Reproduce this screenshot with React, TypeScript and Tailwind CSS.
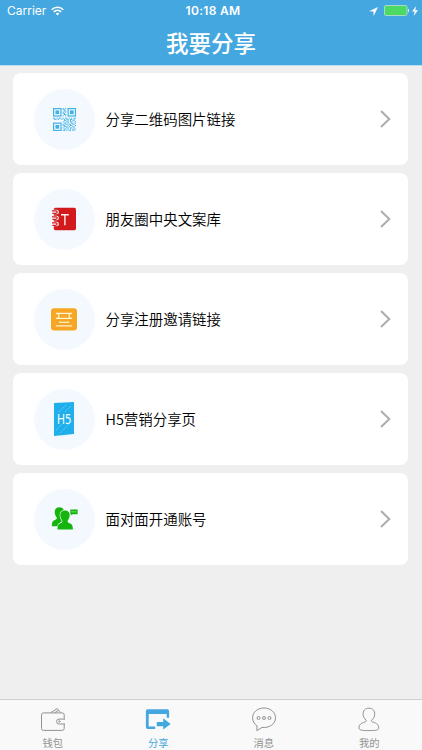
import { useState } from 'react'
import type { ReactNode } from 'react'

// One string per row of modules, the three finder squares are drawn separately
const qrRows = [
  '........#.#........',
  '........##.........',
  '.........##........',
  '........#.#........',
  '........##.........',
  '.........##........',
  '........#.#........',
  '...................',
  '##.#.##.#.##.#.#.##',
  '.##.#..#.#.##.##.#.',
  '.........##.#.#.##.',
  '........#..##.##..#',
  '.........##.#..##.#',
  '........#.##.##.##.',
  '........##..#.##..#',
  '.........###.#..##.',
  '........#..##.##.#.',
  '.........##.#.#.#.#',
  '........##.#.##.##.',
]

function QrIcon() {
  return (
    <svg className="h-[23px] w-[23px]" viewBox="0 0 19 19" fill="#41b1e5">
      {[[0, 0], [12, 0], [0, 12]].map(([x, y]) => (
        <g key={`${x}-${y}`}>
          <rect x={x + 0.5} y={y + 0.5} width="6.1" height="6.1" fill="none" stroke="#41b1e5" strokeWidth="1" />
          <rect x={x + 2} y={y + 2} width="3.1" height="3.1" />
        </g>
      ))}
      {qrRows.map((row, y) =>
        row.split('').map((cell, x) =>
          cell === '#' ? <rect key={`${x}-${y}`} x={x} y={y} width="0.9" height="0.9" /> : null
        )
      )}
    </svg>
  )
}

function NotebookIcon() {
  return (
    <svg className="h-[24px] w-[26px]" viewBox="0 0 26 24">
      <rect x="2.8" y="0.8" width="22.2" height="22.4" rx="1.6" fill="#d2191c" />
      {[3, 9, 15].map(y => (
        <g key={y}>
          <rect x="-1" y={y - 0.3} width="8.8" height="4.6" rx="2" fill="#f4f9ff" />
          <path d={`M1 ${y + 0.9} H5 A1.2 1.2 0 0 1 5 ${y + 3.3} H1.4`} fill="none" stroke="#d2191c" strokeWidth="1.2" />
        </g>
      ))}
      <path d="M10 7.7 H17.8 M13.9 7.7 V18.2" fill="none" stroke="#fdeeee" strokeWidth="1.4" />
    </svg>
  )
}

function InviteIcon() {
  return (
    <svg className="h-[23px] w-[26px]" viewBox="0 0 26 23">
      <rect x="0" y="0.3" width="26" height="22.2" rx="3" fill="#f5a623" />
      <g fill="none" stroke="#fff3d8" strokeWidth="1.2">
        <path d="M4.8 5.4 H21.2 M6.5 5.4 C8.5 6.5 8.5 9 6.5 10.3 M19.5 10.3 C17.5 9 17.5 6.5 19.5 5.4" />
        <path d="M4.8 10.4 H21.2" />
        <path d="M8 14.3 H18.2" />
        <path d="M4.8 17.9 H21.2" />
      </g>
    </svg>
  )
}

function H5Icon() {
  return (
    <svg className="h-[34px] w-[20px] overflow-visible" viewBox="0 0 20 34">
      <path d="M0 1 L20 0 V32 L0 34 Z" fill="#1fb0ec" />
      <g stroke="#83d4f5" strokeWidth="0.7" strokeDasharray="1.3 0.6">
        <path d="M5 10 L12 3 M11 10 L17 4 M2 28 L8 22 M6 31 L18 19" />
      </g>
      <text x="10.2" y="21.6" fontSize="12" textAnchor="middle" fill="#fff" className="font-['Noto_Sans',sans-serif]" transform="translate(10.2 21.6) scale(0.9 1.2) translate(-10.2 -21.6)">H5</text>
    </svg>
  )
}

function PeopleIcon() {
  const person = 'M14 3.5 C10.7 3.5 9.2 5.8 9.3 8.6 C9.4 11.2 10.9 12.8 11.4 14 C11.6 15.3 10.6 15.8 9 16.4 C7 17.2 6.5 18.6 6.5 22.5 H21.9 C21.9 18.6 21.1 17.2 19.1 16.4 C17.5 15.8 16.4 15.3 16.6 14 C17.1 12.8 18.6 11.2 18.7 8.6 C18.8 5.8 17.3 3.5 14 3.5 Z'
  return (
    <svg className="h-[24px] w-[27px]" viewBox="0 0 27 24" fill="#16b50d">
      <path d={person} transform="translate(-5.6 -3.2)" />
      <path d={person} stroke="#f4f9ff" strokeWidth="1.3" paintOrder="stroke" />
      <path d="M19.3 2.4 H26.6 V7.2 H21.6 L20.2 8.6 V7.2 H19.3 Z" />
      <path d="M20.6 4.8 H25.3" stroke="#bff0b9" strokeWidth="0.9" strokeDasharray="1 0.6" />
    </svg>
  )
}

function WalletIcon() {
  return (
    <svg className="h-7 w-7" viewBox="0 0 28 28" fill="none" stroke="currentColor" strokeLinejoin="round">
      <path d="M25.2 12.2 V7.9 A2 2 0 0 0 23.2 5.9 H4.5 A2 2 0 0 0 2.5 7.9 V21.4 A2 2 0 0 0 4.5 23.4 H23.2 A2 2 0 0 0 25.2 21.4 V17" />
      <path d="M26 12.1 H20 A2.4 2.4 0 0 0 20 17 H26" />
      <path d="M11.8 5.6 L18.2 1.6 L21.5 5.4 M15.8 5.6 L19.6 3.3" />
      <circle cx="20.4" cy="14.5" r="0.7" />
    </svg>
  )
}

function ShareIcon() {
  return (
    <svg className="h-7 w-7" viewBox="0 0 28 28" fill="currentColor">
      <path d="M3.8 2.2 H23.1 Q25.1 2.2 25.1 4.2 V10.8 H22.7 V7 H4.7 V19.4 H11.2 V22 H3.8 Q1.9 22 1.9 20 V4.2 Q1.9 2.2 3.8 2.2 Z" />
      <path d="M12.8 14.9 H19.2 V11.3 L26.7 17 L19.2 22.6 V19.2 H12.8 Z" />
    </svg>
  )
}

function MessageIcon() {
  return (
    <svg className="h-7 w-7" viewBox="0 0 28 28" fill="none" stroke="currentColor" strokeLinejoin="round">
      <path d="M14 1 C7.4 1 2.6 5.2 2.6 10.8 C2.6 14.4 4.5 17.2 7 18.8 L6.9 23.7 L12 20.4 C19.6 21.2 25.5 16.9 25.5 10.8 C25.5 5.2 20.5 1 14 1 Z" />
      {[8.5, 14, 19.5].map(x => <circle key={x} cx={x} cy="11" r="1.5" />)}
    </svg>
  )
}

function ProfileIcon() {
  return (
    <svg className="h-7 w-7" viewBox="0 0 28 28" fill="none" stroke="currentColor" strokeLinejoin="round">
      <path d="M13.9 1.2 C9.9 1.2 7.9 3.9 8.1 7.4 C8.2 9.8 9.2 11.8 11.1 13 C11.7 13.9 11.2 14.6 10 15 C6 16.3 4 17.4 4 21 C4 23.1 6.4 23.6 13.9 23.6 S23.7 23.1 23.7 21 C23.7 17.4 21.8 16.3 17.8 15 C16.6 14.6 16.1 13.9 16.7 13 C18.6 11.8 19.6 9.8 19.7 7.4 C19.9 3.9 17.8 1.2 13.9 1.2 Z" />
    </svg>
  )
}

function StatusBar() {
  return (
    <div className="grid h-[21px] grid-cols-[1fr_auto_1fr] items-center pl-[7px] pr-1 pt-px font-[Inter,sans-serif] leading-none text-white">
      <div className="flex items-center gap-[5px]">
        <span className="text-[12px]">Carrier</span>
        <svg className="h-[10px] w-[13px]" viewBox="0 0 13 10" fill="none" stroke="#fff" strokeWidth="1.6">
          <path d="M0.7 3.7 C4 0.5 9 0.5 12.3 3.7 M2.8 5.8 C4.9 3.8 8.1 3.8 10.2 5.8" />
          <path d="M6.5 9.5 L4.6 7.6 Q6.5 6 8.4 7.6 Z" fill="#fff" stroke="none" />
        </svg>
      </div>
      <span className="whitespace-nowrap pl-px text-[12px] font-semibold tracking-[0.3px]">10:18 AM</span>
      <div className="flex items-center justify-end">
        <svg className="mr-[6px] h-[9px] w-[9px]" viewBox="0 0 9 9" fill="#fff">
          <path d="M9 0 L0 4.3 L4.4 4.6 L4.7 9 Z" />
        </svg>
        <svg className="-mt-px h-[11px] w-[26px]" viewBox="0 0 26 11">
          <rect x="0.5" y="0.5" width="22.5" height="10" rx="1.5" fill="#4cd964" stroke="#a4dcc4" />
          <path d="M24 3.5 Q26 5.5 24 7.5 Z" fill="#fff" />
        </svg>
        <svg className="-mt-px ml-0.5 h-[10px] w-[6px]" viewBox="0 0 6 10" fill="#fff">
          <path d="M4.3 0 L0 5.6 H2.7 L1.6 10 L6 4.2 H3.2 Z" />
        </svg>
      </div>
    </div>
  )
}

const shareItems: { label: string; icon: ReactNode }[] = [
  { label: '分享二维码图片链接', icon: <QrIcon /> },
  { label: '朋友圈中央文案库', icon: <NotebookIcon /> },
  { label: '分享注册邀请链接', icon: <InviteIcon /> },
  { label: 'H5营销分享页', icon: <H5Icon /> },
  { label: '面对面开通账号', icon: <PeopleIcon /> },
]

const tabs: { label: string; icon: ReactNode }[] = [
  { label: '钱包', icon: <WalletIcon /> },
  { label: '分享', icon: <ShareIcon /> },
  { label: '消息', icon: <MessageIcon /> },
  { label: '我的', icon: <ProfileIcon /> },
]

export default function App() {
  const [activeTab, setActiveTab] = useState(1)

  return (
    <div className="flex h-screen w-full flex-col bg-[#efeff0] font-['Noto_Sans_CJK_SC',sans-serif]">
      {/* Header */}
      <header className="h-[66px] shrink-0 border-b border-[#b9dcef] bg-[#44a7df]">
        <StatusBar />
        <h1 className="text-center text-[22.5px] font-medium leading-[43px] text-white">我要分享</h1>
      </header>

      {/* Share options */}
      <main className="flex min-h-0 flex-1 flex-col gap-2 overflow-auto pl-[13px] pr-[14px] pt-[7px]">
        {shareItems.map(item => (
          <button key={item.label} className="flex h-[92px] shrink-0 items-center rounded-[8px] bg-white pl-[21px] pr-[17px] text-left">
            <span className="flex h-[61px] w-[61px] items-center justify-center rounded-full bg-[#f4f9ff] pr-px">{item.icon}</span>
            <span className="ml-[10.5px] flex-1 text-[14.45px] font-[350] text-black">{item.label}</span>
            <svg className="h-[18px] w-[11px]" viewBox="0 0 11 18" fill="none" stroke="#adadad" strokeWidth="2">
              <path d="M1 1 L9.3 9 L1 17" />
            </svg>
          </button>
        ))}
      </main>

      {/* Tab bar */}
      <nav className="grid h-[51px] shrink-0 grid-cols-4 border-t border-[#cfcfcf] bg-[#f9f9f9]">
        {tabs.map((tab, i) => (
          <button
            key={tab.label}
            onClick={() => setActiveTab(i)}
            className={`flex flex-col items-center pt-[7px] ${i === activeTab ? 'text-[#44a7df]' : 'text-[#929292]'}`}
          >
            {tab.icon}
            <span className="text-[10.3px] leading-[15px]">{tab.label}</span>
          </button>
        ))}
      </nav>
    </div>
  )
}
